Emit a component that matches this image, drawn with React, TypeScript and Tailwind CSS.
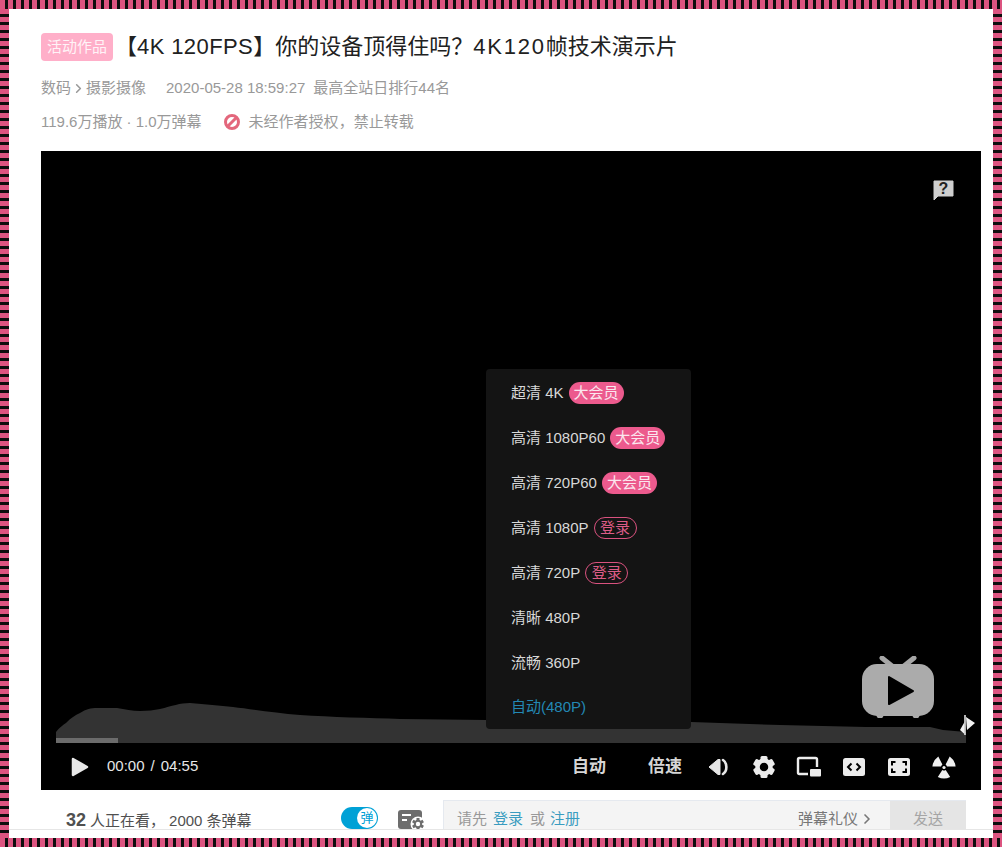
import { ChevronRight } from 'lucide-react';

const stripesH = 'bg-[repeating-linear-gradient(90deg,#dc5480_0,#dc5480_5px,#0d0d0d_5px,#0d0d0d_8px)]';
const stripesV = 'bg-[repeating-linear-gradient(180deg,#dc5480_0,#dc5480_5px,#0d0d0d_5px,#0d0d0d_8px)]';

// fullwidth punctuation, written as escapes so it stays fullwidth
const QUESTION = '\uFF1F';
const COMMA = '\uFF0C';

const qualities = [
  { label: '超清 4K', badge: '大会员' },
  { label: '高清 1080P60', badge: '大会员' },
  { label: '高清 720P60', badge: '大会员' },
  { label: '高清 1080P', badge: '登录' },
  { label: '高清 720P', badge: '登录' },
  { label: '清晰 480P' },
  { label: '流畅 360P' },
];

function QualityMenu() {
  return (
    <div className="absolute left-[445px] top-[218px] h-[360px] w-[205px] rounded-sm bg-[#141414] pl-[25px] text-[15px] text-[#d8d8d8]">
      {qualities.map(({ label, badge }) => (
        <div key={label} className="flex h-[45px] items-center gap-[5px] pt-[3px]">
          <span>{label}</span>
          {badge === '大会员' && (
            <span className="flex h-[22px] w-[55px] items-center justify-center rounded-full bg-[#ec5a8d] text-[#fbe6ee]">
              {badge}
            </span>
          )}
          {badge === '登录' && (
            <span className="flex h-[22px] w-[43px] items-center justify-center rounded-full border border-[#d9527f] text-[#dc5c87]">
              {badge}
            </span>
          )}
        </div>
      ))}
      <div className="flex h-[43px] items-center pt-[3px] text-[#2388b4]">自动(480P)</div>
    </div>
  );
}

function TvLogo() {
  return (
    <svg className="absolute left-[821px] top-[505px]" width="72" height="62" viewBox="0 0 72 62">
      <path d="M20 2 L30 10 M52 2 L42 10" stroke="#a6a6a6" strokeWidth="5" strokeLinecap="round" />
      <rect x="0" y="8" width="72" height="52" rx="15" fill="#ababab" />
      <circle cx="18" cy="59" r="3.5" fill="#ababab" />
      <circle cx="54" cy="59" r="3.5" fill="#ababab" />
      <path d="M27 21 L51 35 L27 48 Z" fill="#000" stroke="#000" strokeWidth="2" strokeLinejoin="round" />
    </svg>
  );
}

function HelpBubble() {
  return (
    <svg className="absolute left-[892px] top-[29px]" width="21" height="21" viewBox="0 0 21 21">
      <path d="M1 1 H20 V16 H5 L1 20 Z" fill="#cfcfcf" stroke="#cfcfcf" strokeWidth="1" strokeLinejoin="round" />
      <text x="10.5" y="14" textAnchor="middle" fontSize="16" fontWeight="700" fill="#222" fontFamily="Liberation Sans">
        ?
      </text>
    </svg>
  );
}

function Waveform() {
  return (
    <svg className="block" width="920" height="40" viewBox="56 703 920 40">
      <path
        d="M56 743 V732 C60 727 63 725 66 723 C71 718 75 715 80 713 C86 709 91 708 97 708 L117 708 C125 709 132 711 140 711 C148 711 154 710 160 709 C172 706 180 703 190 703 C205 704 220 706 233 707 C250 709 275 713 300 715 C330 717 370 718 400 719 L486 720 L691 722 L780 725 L866 727 L930 727 L943 730 L966 732 V743 Z"
        fill="#333"
      />
      <rect x="56" y="738" width="62" height="5" fill="#6b6b6b" />
      <path d="M965 715 V735" stroke="#f2f2f2" strokeWidth="1.5" />
      <path d="M966 717 L975 723 L967 730 Z M964.5 722 L960 730 L964.5 734 Z" fill="#f2f2f2" />
    </svg>
  );
}

function VolumeIcon() {
  return (
    <svg width="22" height="20" viewBox="0 0 22 20">
      <path d="M1 10 L10 2.5 H12 V17.5 H10 Z" fill="#e6e6e6" stroke="#e6e6e6" strokeLinejoin="round" />
      <path d="M15 3 C19.5 6 19.5 14 15 17" fill="none" stroke="#e6e6e6" strokeWidth="2.6" strokeLinecap="round" />
    </svg>
  );
}

function GearIcon() {
  return (
    <svg width="24" height="24" viewBox="0 0 24 24">
      {[0, 60, 120, 180, 240, 300].map((deg) => (
        <rect key={deg} x="8.5" y="1" width="7" height="6" rx="1.5" fill="#ececec" transform={`rotate(${deg} 12 12)`} />
      ))}
      <circle cx="12" cy="12" r="6.5" fill="none" stroke="#ececec" strokeWidth="4.5" />
    </svg>
  );
}

function PipIcon() {
  return (
    <svg width="26" height="22" viewBox="0 0 26 22">
      <path d="M12 18 H3.5 Q2 18 2 16.5 V3.5 Q2 2 3.5 2 H19.5 Q21 2 21 3.5 V11" fill="none" stroke="#ececec" strokeWidth="2.4" />
      <rect x="14" y="13" width="11" height="7.5" rx="1" fill="#ececec" />
    </svg>
  );
}

function WideIcon() {
  return (
    <svg width="22" height="18" viewBox="0 0 22 18">
      <rect x="0" y="0" width="22" height="18" rx="2.5" fill="#ececec" />
      <path d="M8.5 5.5 L5 9 L8.5 12.5 M13.5 5.5 L17 9 L13.5 12.5" fill="none" stroke="#000" strokeWidth="2" />
    </svg>
  );
}

function WebFullIcon() {
  return (
    <svg width="22" height="18" viewBox="0 0 22 18">
      <rect x="0" y="0" width="22" height="18" rx="2.5" fill="#ececec" />
      <path d="M7.5 4 H4 V7.5 M14.5 4 H18 V7.5 M7.5 14 H4 V10.5 M14.5 14 H18 V10.5" fill="none" stroke="#000" strokeWidth="2" />
    </svg>
  );
}

function RadiationIcon() {
  return (
    <svg width="24" height="24" viewBox="0 0 24 24">
      <circle cx="12" cy="12.5" r="1.6" fill="#f0f0f0" />
      <path d="M6.3 1.5 L10.4 9.6 Q9.4 10.4 9 11.6 L0.4 11.6 Q0.8 5.5 6.3 1.5 Z" fill="#f0f0f0" />
      <path d="M17.7 1.5 L13.6 9.6 Q14.6 10.4 15 11.6 L23.6 11.6 Q23.2 5.5 17.7 1.5 Z" fill="#f0f0f0" />
      <path d="M10.3 15 Q12 16 13.7 15 L18.2 22 Q12 25.2 5.8 22 Z" fill="#f0f0f0" />
    </svg>
  );
}

function ControlBar() {
  return (
    <div className="flex h-[47px] items-center pl-[30px] pr-[15px] text-[#e6e6e6]">
      <svg width="18" height="20" viewBox="0 0 18 20">
        <path d="M2 2 L16 10 L2 18 Z" fill="#e8e8e8" stroke="#e8e8e8" strokeWidth="2.5" strokeLinejoin="round" />
      </svg>
      <span className="ml-[18px] flex text-[15px]">
        00:00<span className="mx-[6px]">/</span>04:55
      </span>
      <div className="ml-auto flex items-center">
        <span className="w-[90px] text-center text-[17px] font-bold text-[#d6d6d6]">自动</span>
        <span className="w-[62px] text-center text-[17px] font-bold text-[#d6d6d6]">倍速</span>
        {[VolumeIcon, GearIcon, PipIcon, WideIcon, WebFullIcon, RadiationIcon].map((Icon) => (
          <div key={Icon.name} className="flex w-[45px] justify-center">
            <Icon />
          </div>
        ))}
      </div>
    </div>
  );
}

function DanmakuBar() {
  return (
    <div className="flex h-[40px] items-start pl-[25px] pr-[15px] pt-[10px] text-[#505050]">
      <div className="mt-[7px] flex w-[275px] items-baseline whitespace-nowrap text-[15px]">
        <span className="text-[18px] font-bold">32</span>
        <span className="ml-[4px]">人正在看{COMMA}</span>
        <span className="ml-[4px]">2000 条弹幕</span>
      </div>
      <div className="mt-[7px] flex h-[22px] w-[37px] items-center justify-end rounded-full bg-[#00a1d6] pr-[1px]">
        <span className="flex h-[20px] w-[20px] items-center justify-center rounded-full bg-white text-[13px] text-[#00a1d6]">弹</span>
      </div>
      <svg className="ml-[20px] mt-[9px]" width="27" height="22" viewBox="0 0 27 22">
        <rect x="0" y="1" width="24" height="19" rx="3" fill="#6d6d6d" />
        <path d="M4 6 H13 M4 11 H9" stroke="#fff" strokeWidth="2" />
        <circle cx="20" cy="15" r="7.5" fill="#fff" />
        {[0, 60, 120].map((deg) => (
          <rect key={deg} x="18.5" y="9" width="3" height="12" fill="#6d6d6d" transform={`rotate(${deg} 20 15)`} />
        ))}
        <circle cx="20" cy="15" r="3.2" fill="#fff" stroke="#6d6d6d" strokeWidth="2" />
      </svg>
      <div className="ml-[18px] flex h-[40px] flex-1 border-l border-t border-[#e5e9ef] bg-[#f4f4f4] text-[15px]">
        <div className="flex flex-1 items-start pl-[13px] pt-[7px] text-[#999]">
          <span>请先</span>
          <span className="ml-[6px] text-[#3a9cc0]">登录</span>
          <span className="ml-[7px]">或</span>
          <span className="ml-[5px] text-[#3a9cc0]">注册</span>
          <span className="ml-auto mr-[15px] flex items-center text-[#777]">
            弹幕礼仪
            <ChevronRight className="ml-[1px] h-[18px] w-[16px]" strokeWidth={2.5} />
          </span>
        </div>
        <div className="w-[76px] bg-[#e5e5e5] pt-[7px] text-center text-[#a5a5a5]">发送</div>
      </div>
    </div>
  );
}

export default function App() {
  return (
    <div className="flex h-[847px] w-[1002px] flex-col overflow-hidden bg-white font-['Liberation_Sans','Noto_Sans_CJK_SC',sans-serif]">
      <div className={`h-[9px] shrink-0 ${stripesH}`} />
      <div className="flex min-h-0 flex-1">
        <div className={`w-[9px] shrink-0 ${stripesV}`} />
        <div className="flex min-w-0 flex-1 flex-col">
          <div className="h-[821px] overflow-hidden border-b border-[#e6e6e6] pl-[32px] pr-[12px]">
            <div className="mt-[24px] flex h-[28px] items-center">
              <span className="flex h-[28px] w-[72px] items-center justify-center rounded-sm bg-[#ffafc9] text-[15px] text-[#fff3f7]">
                活动作品
              </span>
              <h1 className="ml-[2px] whitespace-nowrap text-[22px] leading-[28px] text-[#212121]">
                【<span className="tracking-[0.4px]">4K 120FPS</span>】你的设备顶得住吗{QUESTION}<span className="tracking-[1.8px]">4K120</span>帧技术演示片
              </h1>
            </div>
            <div className="mt-[17px] flex h-[20px] items-center text-[15px] text-[#999]">
              <span>数码</span>
              <ChevronRight className="h-[15px] w-[15px]" strokeWidth={2.5} />
              <span>摄影摄像</span>
              <span className="ml-[20px]">2020-05-28 18:59:27</span>
              <span className="ml-[8px]">最高全站日排行44名</span>
            </div>
            <div className="mt-[14px] flex h-[20px] items-center text-[15px] text-[#999]">
              <span>119.6万播放 · 1.0万弹幕</span>
              <svg className="ml-[22px]" width="16" height="16" viewBox="0 0 16 16">
                <circle cx="8" cy="8" r="6.5" fill="none" stroke="#e3677c" strokeWidth="3" />
                <path d="M3.5 12.5 L12.5 3.5" stroke="#e3677c" strokeWidth="3" />
              </svg>
              <span className="ml-[9px]">未经作者授权{COMMA}禁止转载</span>
            </div>
            <div className="relative mt-[19px] flex h-[639px] w-[940px] flex-col bg-black">
              <HelpBubble />
              <div className="flex min-h-0 flex-1 items-end pl-[15px]">
                <Waveform />
              </div>
              <ControlBar />
              <QualityMenu />
              <TvLogo />
            </div>
            <DanmakuBar />
          </div>
        </div>
        <div className={`w-[9px] shrink-0 ${stripesV}`} />
      </div>
      <div className={`h-[9px] shrink-0 ${stripesH}`} />
    </div>
  );
}
